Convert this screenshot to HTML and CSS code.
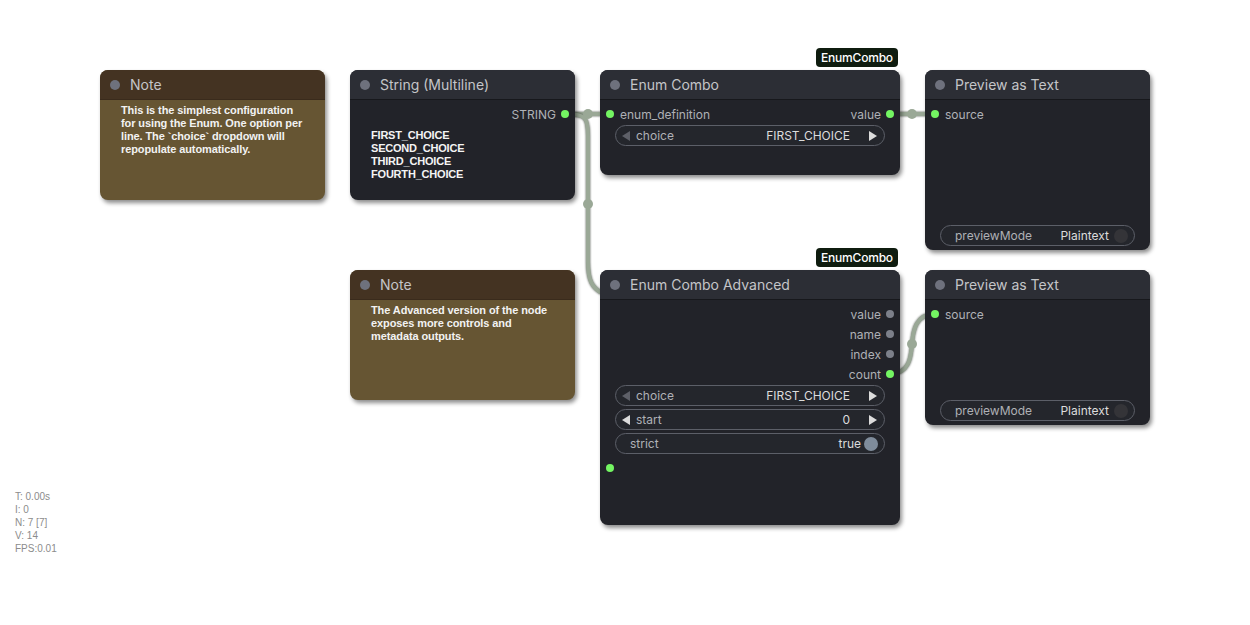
FILE: index.html
```html
<!DOCTYPE html>
<html>
<head>
    <meta charset="utf-8">
    <title>Enum Combo workflow</title>
    <link rel="stylesheet" href="styles.css">
</head>
<body>
    <div class="canvas">
        <!-- links are drawn under the nodes -->
        <svg class="links" width="1250" height="625" viewBox="0 0 1250 625">
            <g class="link">
                <path d="M566,114 L610,114"/>
                <path d="M566,114 C586,114 588,118 588,136 L588,262 C588,280 592,288 602,293"/>
                <path d="M890,114 L935,114"/>
                <path d="M890,374 C910,374 911,356 912,344 C913,330 916,314 935,314"/>
            </g>
            <g class="link-center">
                <circle cx="588" cy="114" r="5"/>
                <circle cx="588" cy="204" r="5"/>
                <circle cx="912" cy="114" r="5"/>
                <circle cx="912" cy="344" r="5"/>
            </g>
        </svg>

        <!-- Note -->
        <div class="node note note-a">
            <div class="node-title"><span class="title-dot"></span>Note</div>
            <div class="note-text">This is the simplest configuration for using the Enum. One option per line. The `choice` dropdown will repopulate automatically.</div>
        </div>

        <!-- String (Multiline) -->
        <div class="node string-node">
            <div class="node-title"><span class="title-dot"></span>String (Multiline)</div>
            <div class="node-body">
                <div class="slot out">STRING<span class="slot-dot on"></span></div>
                <div class="multiline">FIRST_CHOICE<br>SECOND_CHOICE<br>THIRD_CHOICE<br>FOURTH_CHOICE</div>
            </div>
        </div>

        <!-- Enum Combo -->
        <div class="badge badge-a">EnumCombo</div>
        <div class="node enum-node">
            <div class="node-title"><span class="title-dot"></span>Enum Combo</div>
            <div class="node-body">
                <div class="slot-row">
                    <div class="slot in"><span class="slot-dot on"></span>enum_definition</div>
                    <div class="slot out">value<span class="slot-dot on"></span></div>
                </div>
                <div class="widget">
                    <span class="arrow left dim"></span>
                    <span class="w-label">choice</span>
                    <span class="w-value">FIRST_CHOICE</span>
                    <span class="arrow right"></span>
                </div>
            </div>
        </div>

        <!-- Preview as Text -->
        <div class="node preview-node preview-a">
            <div class="node-title"><span class="title-dot"></span>Preview as Text</div>
            <div class="node-body">
                <div class="slot in"><span class="slot-dot on"></span>source</div>
                <div class="widget plain">
                    <span class="w-label">previewMode</span>
                    <span class="w-value">Plaintext</span>
                    <span class="toggle off"></span>
                </div>
            </div>
        </div>

        <!-- Note -->
        <div class="node note note-b">
            <div class="node-title"><span class="title-dot"></span>Note</div>
            <div class="note-text">The Advanced version of the node exposes more controls and metadata outputs.</div>
        </div>

        <!-- Enum Combo Advanced -->
        <div class="badge badge-b">EnumCombo</div>
        <div class="node enum-adv-node">
            <div class="node-title"><span class="title-dot"></span>Enum Combo Advanced</div>
            <div class="node-body">
                <div class="slot out">value<span class="slot-dot"></span></div>
                <div class="slot out">name<span class="slot-dot"></span></div>
                <div class="slot out">index<span class="slot-dot"></span></div>
                <div class="slot out">count<span class="slot-dot on"></span></div>
                <div class="widget">
                    <span class="arrow left dim"></span>
                    <span class="w-label">choice</span>
                    <span class="w-value">FIRST_CHOICE</span>
                    <span class="arrow right"></span>
                </div>
                <div class="widget">
                    <span class="arrow left"></span>
                    <span class="w-label">start</span>
                    <span class="w-value">0</span>
                    <span class="arrow right"></span>
                </div>
                <div class="widget plain">
                    <span class="w-label">strict</span>
                    <span class="w-value">true</span>
                    <span class="toggle"></span>
                </div>
                <div class="slot in"><span class="slot-dot on"></span></div>
            </div>
        </div>

        <!-- Preview as Text -->
        <div class="node preview-node preview-b">
            <div class="node-title"><span class="title-dot"></span>Preview as Text</div>
            <div class="node-body">
                <div class="slot in"><span class="slot-dot on"></span>source</div>
                <div class="widget plain">
                    <span class="w-label">previewMode</span>
                    <span class="w-value">Plaintext</span>
                    <span class="toggle off"></span>
                </div>
            </div>
        </div>

        <div class="stats">T: 0.00s<br>I: 0<br>N: 7 [7]<br>V: 14<br>FPS:0.01</div>
    </div>
</body>
</html>
```

FILE: styles.css
```css
body {
    margin: 0;
    background: #fff;
}
.canvas {
    position: relative;
    width: 1250px;
    height: 625px;
    overflow: hidden;
    background: #fff;
    font-family: Inter, "Noto Sans", sans-serif;
}

/* links */
.links {
    position: absolute;
    left: 0;
    top: 0;
}
.link path {
    fill: none;
    stroke: #9aa896;
    stroke-width: 4;
    filter: drop-shadow(0 0 0.8px #4d554b);
}
.link-center circle {
    fill: #9aa896;
}

/* nodes */
.node {
    position: absolute;
    display: flex;
    flex-direction: column;
    box-sizing: border-box;
    background: #222329;
    border-radius: 8px;
    box-shadow: 2px 3px 4px rgba(0,0,0,0.45);
}
.node-title {
    flex: none;
    box-sizing: border-box;
    height: 30px;
    display: flex;
    align-items: center;
    padding-left: 10px;
    background: #2c2e35;
    border-bottom: 1px solid #17181c;
    border-radius: 8px 8px 0 0;
    color: #c4c5c8;
    font-size: 14px;
}
.title-dot {
    width: 10px;
    height: 10px;
    border-radius: 50%;
    background: #6e717d;
    margin-right: 10px;
}
.node-body {
    flex: 1;
    display: flex;
    flex-direction: column;
    padding-top: 4px;
}

.note { background: #665533; }
.note .node-title { background: #443322; border-bottom-color: #3a2b1c; }
.note-text {
    padding: 4px 18px 0 21px;
    color: #f2f2f2;
    font-family: "Liberation Sans", Arial, sans-serif;
    font-weight: bold;
    font-size: 11px;
    line-height: 13px;
    letter-spacing: -0.1px;
}

.note-a { left: 100px; top: 70px; width: 225px; height: 130px; }
.note-b { left: 350px; top: 270px; width: 225px; height: 130px; }
.string-node { left: 350px; top: 70px; width: 225px; height: 130px; }
.enum-node { left: 600px; top: 70px; width: 300px; height: 105px; }
.enum-adv-node { left: 600px; top: 270px; width: 300px; height: 255px; }
.preview-a { left: 925px; top: 70px; width: 225px; height: 180px; }
.preview-b { left: 925px; top: 270px; width: 225px; height: 155px; }

/* slots */
.slot-row {
    display: flex;
    justify-content: space-between;
}
.slot {
    height: 20px;
    display: flex;
    align-items: center;
    gap: 6px;
    color: #afb1b6;
    font-size: 12px;
}
.slot.in { padding-left: 6px; }
.slot.out {
    justify-content: flex-end;
    padding-right: 6px;
    gap: 5px;
}
.slot-dot {
    width: 8px;
    height: 8px;
    border-radius: 50%;
    background: #7d808a;
}
.slot-dot.on { background: #74f562; }

.multiline {
    padding: 5px 0 0 21px;
    color: #f4f4f4;
    font-family: "Liberation Sans", Arial, sans-serif;
    font-weight: bold;
    font-size: 11px;
    line-height: 13px;
    letter-spacing: -0.2px;
}

/* widgets */
.widget {
    flex: none;
    box-sizing: border-box;
    height: 21px;
    margin: 1px 15px 2px;
    display: flex;
    align-items: center;
    padding: 0 7px 0 6px;
    border: 1px solid #5c5f68;
    border-radius: 11px;
    background: #24262c;
    font-size: 12px;
}
.widget + .widget { margin-top: 1px; }
.widget.plain { padding: 0 6px 0 14px; }
.w-label {
    color: #afb1b6;
    flex: 1;
}
.w-value {
    color: #dcdcdc;
}
.arrow {
    width: 0;
    height: 0;
    border-top: 5px solid transparent;
    border-bottom: 5px solid transparent;
}
.arrow.left {
    border-right: 8px solid #dcdcdc;
    margin-right: 6px;
}
.arrow.left.dim { border-right-color: #5e6068; }
.arrow.right {
    border-left: 8px solid #dcdcdc;
    margin-left: 19px;
}
.toggle {
    width: 14px;
    height: 14px;
    border-radius: 50%;
    background: #7f8c9b;
    margin-left: 3px;
}
.toggle.off { background: #343438; margin-left: 5px; }

.preview-node .widget { margin-top: auto; margin-bottom: 4px; }

.enum-adv-node .widget:first-of-type { margin-top: 1px; }
.enum-adv-node .slot.in { margin-top: 2px; }

/* group badges */
.badge {
    position: absolute;
    height: 19px;
    padding: 0 5px;
    display: flex;
    align-items: center;
    background: #0f1c0f;
    border-radius: 4px;
    color: #fff;
    font-size: 12px;
    font-weight: 500;
    letter-spacing: -0.2px;
}
.badge-a { left: 816px; top: 48px; }
.badge-b { left: 816px; top: 248px; }

.stats {
    position: absolute;
    left: 15px;
    top: 490px;
    color: #8c8c8c;
    font-family: "Liberation Sans", Arial, sans-serif;
    font-size: 10px;
    line-height: 13px;
}
```
